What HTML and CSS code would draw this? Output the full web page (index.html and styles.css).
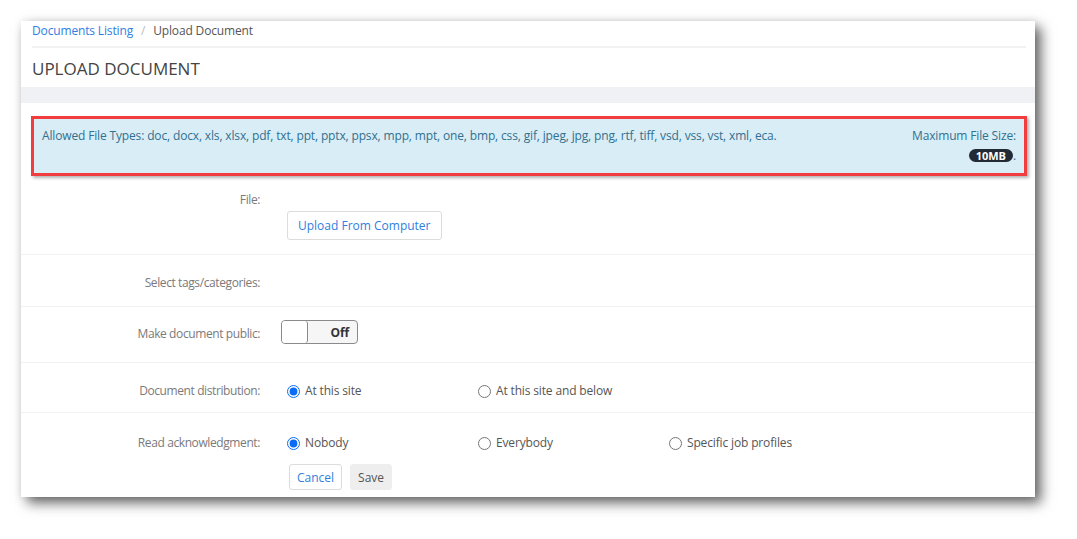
FILE: index.html
```html
<!DOCTYPE html>
<html lang="en">
<head>
    <meta charset="UTF-8">
    <meta name="viewport" content="width=device-width, initial-scale=1.0">
    <title>Upload Document</title>
    <link rel="stylesheet" href="styles.css">
</head>
<body>

<div class="panel">
    <div class="breadcrumb">
        <a href="#">Documents Listing</a>
        <span class="sep">/</span>
        <span class="current">Upload Document</span>
    </div>
    <h1 class="page-title">UPLOAD DOCUMENT</h1>
    <div class="band"></div>

    <div class="alert-info">
        <div class="types">Allowed File Types: doc, docx, xls, xlsx, pdf, txt, ppt, pptx, ppsx, mpp, mpt, one, bmp, css, gif, jpeg, jpg, png, rtf, tiff, vsd, vss, vst, xml, eca.</div>
        <div class="max-size">
            Maximum File Size:<br>
            <span class="badge">10MB</span>.
        </div>
    </div>

    <div class="form-row row-file">
        <label class="form-label">File:</label>
        <div class="form-control">
            <button class="btn btn-upload">Upload From Computer</button>
        </div>
    </div>

    <div class="form-row row-tags">
        <label class="form-label">Select tags/categories:</label>
        <div class="form-control"></div>
    </div>

    <div class="form-row row-public">
        <label class="form-label">Make document public:</label>
        <div class="form-control">
            <div class="toggle">
                <span class="knob"></span>
                <span class="toggle-text">Off</span>
            </div>
        </div>
    </div>

    <div class="form-row row-radio">
        <label class="form-label">Document distribution:</label>
        <div class="form-control radios">
            <label class="radio"><input type="radio" name="dist" checked> At this site</label>
            <label class="radio"><input type="radio" name="dist"> At this site and below</label>
        </div>
    </div>

    <div class="form-row row-radio last">
        <label class="form-label">Read acknowledgment:</label>
        <div class="form-control">
            <div class="radios">
                <label class="radio"><input type="radio" name="ack" checked> Nobody</label>
                <label class="radio"><input type="radio" name="ack"> Everybody</label>
                <label class="radio"><input type="radio" name="ack"> Specific job profiles</label>
            </div>
            <div class="actions">
                <button class="btn btn-cancel">Cancel</button>
                <button class="btn btn-save">Save</button>
            </div>
        </div>
    </div>
</div>

</body>
</html>
```

FILE: styles.css
```css
:root {
    --blue: #2f7ee0;
    --text: #555;
    --label: #7a7a7a;
    --line: #f2f2f2;
}
body {
    font-family: 'Open Sans', sans-serif;
    font-size: 12px;
    letter-spacing: -0.15px;
    background: #fff;
    margin: 0;
    padding: 21px 42px 42px 21px;
}
.panel {
    width: 1014px;
    height: 476px;
    background: #fff;
    box-shadow: 6px 6px 12px rgba(0,0,0,0.6), 0 0 8px rgba(0,0,0,0.08);
    overflow: hidden;
}
.breadcrumb {
    margin: 0 9px 0 11px;
    height: 25px;
    line-height: 19px;
    border-bottom: 2px solid var(--line);
    color: var(--text);
}
.breadcrumb a { color: var(--blue); text-decoration: none; }
.breadcrumb .sep { color: #bbb; padding: 0 5px; }
.page-title {
    margin: 0;
    padding: 0 11px;
    height: 39px;
    line-height: 42px;
    font-size: 17px;
    font-weight: 400;
    letter-spacing: 0;
    color: #444;
}
.band { height: 16px; background: #f0f1f5; }
.alert-info {
    margin: 13px 8px 0 10px;
    border: 3px solid #f23d3f;
    background: #d9edf7;
    color: #31708f;
    display: flex;
    justify-content: space-between;
    padding: 7px 8px 0 8px;
    line-height: 20px;
    box-shadow: 2px 2px 3px rgba(0,0,0,0.3);
    height: 47px;
}
.max-size { text-align: right; white-space: nowrap; }
.badge {
    display: inline-block;
    background: #222b35;
    color: #fff;
    font-weight: 700;
    font-size: 11px;
    line-height: 13px;
    padding: 0 7px;
    border-radius: 7px;
    letter-spacing: 0;
}
.form-row {
    display: flex;
    align-items: flex-start;
    border-bottom: 1px solid var(--line);
}
.form-row.last { border-bottom: none; }
.form-label {
    width: 239px;
    text-align: right;
    color: var(--label);
    line-height: 20px;
    letter-spacing: -0.4px;
    flex-shrink: 0;
}
.form-control { margin-left: 27px; flex: 1; }
.row-file { padding: 14px 0 14px; }
.row-file .form-control { padding-top: 21px; }
.row-tags { padding: 18px 0 13px; height: 20px; }
.row-public { padding: 13px 0 18px; }
.row-public .form-label { margin-top: 4px; }
.row-public .form-control { margin-left: 21px; }
.row-radio { padding: 18px 0 11px; }
.row-radio.last { padding: 20px 0 6px; }
.btn {
    font-family: inherit;
    font-size: 12px;
    border-radius: 3px;
    cursor: pointer;
}
.btn-upload {
    height: 29px;
    padding: 0 10px;
    background: #fff;
    border: 1px solid #dcdcdc;
    color: var(--blue);
}
.toggle {
    box-sizing: border-box;
    width: 77px;
    height: 24px;
    border: 1px solid #8a8a8a;
    border-radius: 4px;
    background: #f6f6f6;
    display: flex;
    align-items: center;
    justify-content: space-between;
    overflow: hidden;
}
.knob {
    width: 25px;
    height: 22px;
    background: #fff;
    border-right: 1px solid #8a8a8a;
    border-radius: 3px;
}
.toggle-text {
    font-weight: 700;
    font-size: 12px;
    color: #333;
    padding-right: 8px;
}
.radios { display: flex; }
.radio {
    width: 191px;
    display: flex;
    align-items: center;
    gap: 5px;
    color: var(--text);
    line-height: 20px;
}
.radio input {
    margin: 0;
    width: 13px;
    height: 13px;
    accent-color: #0a6cf5;
}
.actions { display: flex; gap: 8px; margin-top: 11px; margin-left: 2px; }
.btn-cancel {
    height: 26px;
    padding: 0 7px;
    background: #fff;
    border: 1px solid #dcdcdc;
    color: var(--blue);
}
.btn-save {
    height: 26px;
    padding: 0 7px;
    background: #eeeeee;
    border: 1px solid #eeeeee;
    color: var(--text);
}
```
